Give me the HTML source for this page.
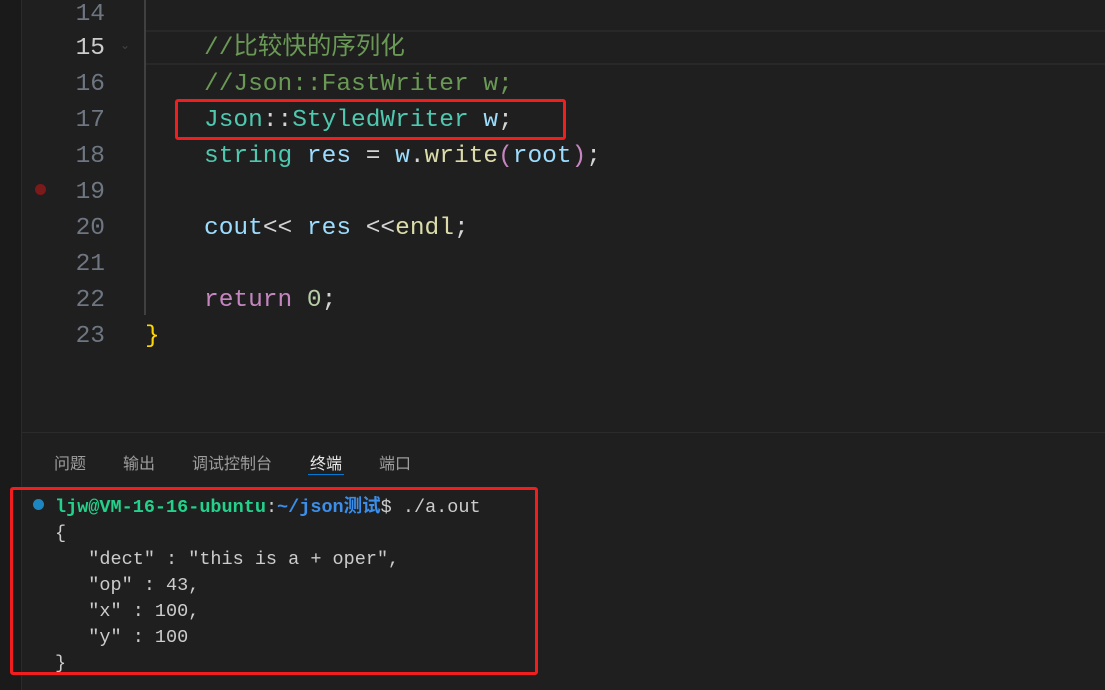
<!DOCTYPE html>
<html><head><meta charset="utf-8"><style>
body{margin:0;width:1105px;height:690px;background:#1f1f1f;position:relative;overflow:hidden;font-family:"Liberation Mono","Noto Sans CJK SC",monospace}
.strip{position:absolute;left:0;top:0;width:21px;height:690px;background:#1a1a1a;border-right:1px solid #2b2b2b}
.ln{position:absolute;left:60px;width:45px;text-align:right;font-size:24.5px;color:#6e7681;line-height:36px}
.code{position:absolute;left:204px;font-size:24.5px;line-height:36px;white-space:pre;color:#d4d4d4}
.t{position:absolute;left:55px;font-size:18.5px;line-height:26px;white-space:pre;color:#cccccc}
.c{color:#6a9955}.ty{color:#4ec9b0}.v{color:#9cdcfe}.f{color:#dcdcaa}.k{color:#c586c0}.n{color:#b5cea8}
.tab{position:absolute;top:450px;font-family:"Liberation Sans","Noto Sans CJK SC",sans-serif;font-size:16px;color:#9d9d9d}
</style></head><body>
<div class="strip"></div>
<div style="position:absolute;left:145px;top:30px;width:960px;height:31px;border-top:2px solid #282828;border-bottom:2px solid #282828"></div>
<div style="position:absolute;left:144px;top:0;width:2px;height:315px;background:#404040"></div>
<div class="ln" style="top:-3px">14</div>
<div class="ln" style="top:31px;color:#ccc">15</div>
<div class="ln" style="top:67px">16</div>
<div class="ln" style="top:103px">17</div>
<div class="ln" style="top:139px">18</div>
<div class="ln" style="top:175px">19</div>
<div class="ln" style="top:211px">20</div>
<div class="ln" style="top:247px">21</div>
<div class="ln" style="top:283px">22</div>
<div class="ln" style="top:319px">23</div>
<div style="position:absolute;left:35px;top:184px;width:11px;height:11px;border-radius:50%;background:#7a1a1a"></div>
<div style="position:absolute;left:120px;top:38px;color:#444;font-size:12px;font-family:'DejaVu Sans'">⌄</div>
<div class="code c" style="top:31px">//比较快的序列化</div>
<div class="code c" style="top:67px">//Json::FastWriter w;</div>
<div class="code" style="top:103px"><span class="ty">Json</span>::<span class="ty">StyledWriter</span> <span class="v">w</span>;</div>
<div class="code" style="top:139px"><span class="ty">string</span> <span class="v">res</span> = <span class="v">w</span>.<span class="f">write</span><span class="k">(</span><span class="v">root</span><span class="k">)</span>;</div>
<div class="code" style="top:211px"><span class="v">cout</span>&lt;&lt; <span class="v">res</span> &lt;&lt;<span class="f">endl</span>;</div>
<div class="code" style="top:283px"><span class="k">return</span> <span class="n">0</span>;</div>
<div class="code" style="top:319px;left:145px;color:#ffd700">}</div>
<div style="position:absolute;left:175px;top:99px;width:385px;height:35px;border:3px solid #f01e1e;border-radius:3px"></div>
<div style="position:absolute;left:22px;top:432px;width:1083px;height:1px;background:#2b2b2b"></div>
<div class="tab" style="left:54px">问题</div>
<div class="tab" style="left:123px">输出</div>
<div class="tab" style="left:192px">调试控制台</div>
<div class="tab" style="left:310px;color:#e7e7e7">终端</div>
<div style="position:absolute;left:308px;top:474px;width:36px;height:1px;background:#0078d4"></div>
<div class="tab" style="left:379px">端口</div>
<div style="position:absolute;left:10px;top:487px;width:522px;height:182px;border:3px solid #f01e1e;border-radius:3px"></div>
<div style="position:absolute;left:33px;top:499px;width:11px;height:11px;border-radius:50%;background:#1c86c0"></div>
<div class="t" style="top:495px"><b style="color:#23d18b">ljw@VM-16-16-ubuntu</b>:<b style="color:#3b8eea">~/json测试</b>$ ./a.out</div>
<div class="t" style="top:521px">{</div>
<div class="t" style="top:547px">   "dect" : "this is a + oper",</div>
<div class="t" style="top:573px">   "op" : 43,</div>
<div class="t" style="top:599px">   "x" : 100,</div>
<div class="t" style="top:625px">   "y" : 100</div>
<div class="t" style="top:651px">}</div>
</body></html>
